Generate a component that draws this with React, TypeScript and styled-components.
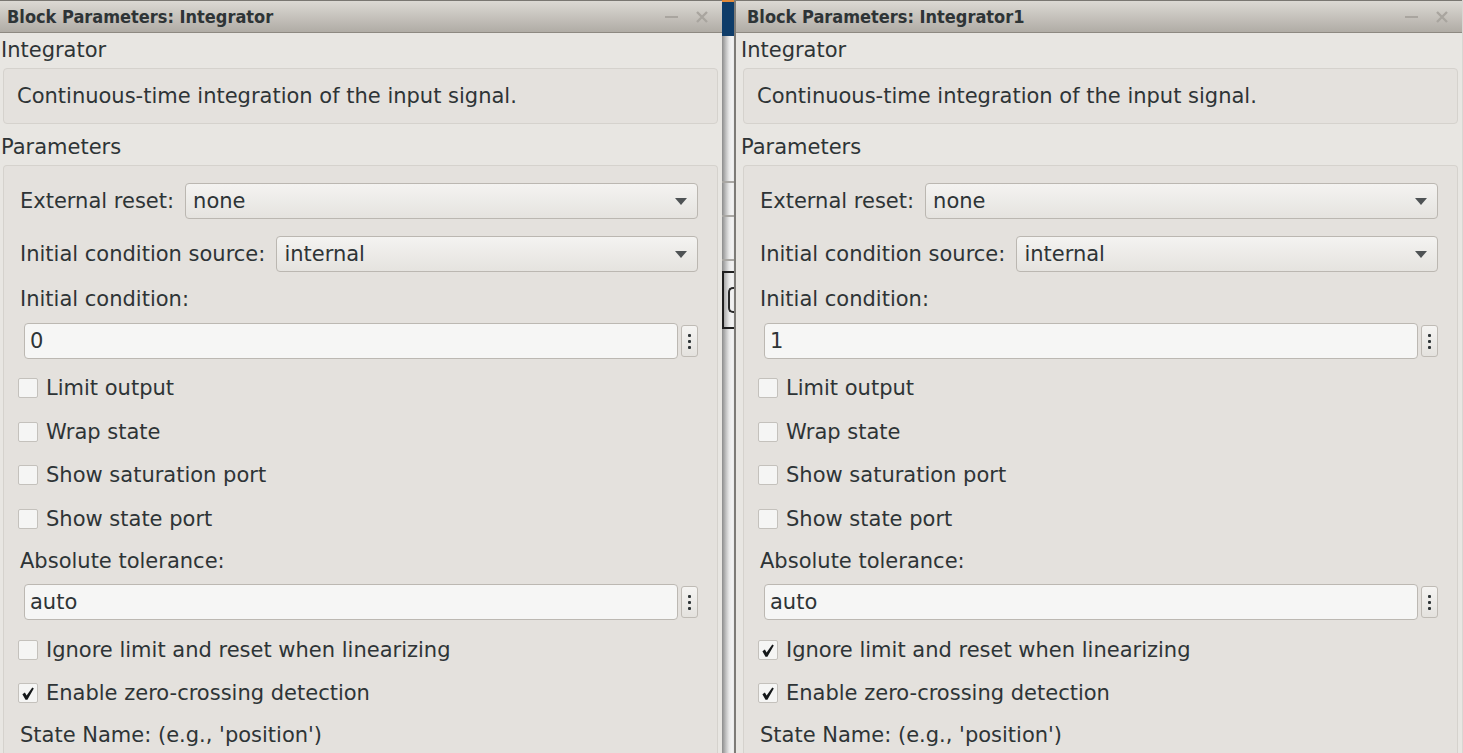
import React from "react";
import styled, { createGlobalStyle } from "styled-components";

const GlobalStyle = createGlobalStyle`
  html, body { margin: 0; padding: 0; background: #e8e6e2; }
  body {
    font-family: "DejaVu Sans", "Liberation Sans", sans-serif;
    color: #2e3436;
    overflow: hidden;
  }
  * { box-sizing: border-box; }
`;

const Desktop = styled.div`
  display: flex;
  width: 1463px;
  height: 753px;
  overflow: hidden;
  background: #d8d6d2;
`;

const Window = styled.section<{ $shift?: number }>`
  flex: 0 0 726px;
  margin-left: ${(p) => p.$shift ?? 0}px;
  display: flex;
  flex-direction: column;
  height: 100%;
  background: #e8e6e2;
`;

const TitleBar = styled.header`
  flex: 0 0 33px;
  display: flex;
  align-items: center;
  padding: 0 14px 0 11px;
  background: linear-gradient(#dcd9d4, #b0aca5);
  border-top: 1px solid #7a7772;
  border-bottom: 1px solid #8d8981;
`;

const Title = styled.h1`
  flex: 1;
  margin: 0;
  font-family: "DejaVu Sans Condensed", "DejaVu Sans", sans-serif;
  font-weight: bold;
  font-size: 18px;
  font-stretch: condensed;
  line-height: 22px;
  color: #2e3436;
  white-space: nowrap;
`;

const Controls = styled.div`
  display: flex;
  align-items: center;
  gap: 18px;
  color: #a9a59f;
`;

const Body = styled.div`
  flex: 1;
  min-height: 0;
  display: flex;
  flex-direction: column;
  padding: 0 4px 0 5px;
  font-size: 21px;
  line-height: 24px;
`;

const SectionLabel = styled.div<{ $mt: number }>`
  margin-top: ${(p) => p.$mt}px;
  line-height: 24px;
  white-space: nowrap;
`;

const DescBox = styled.div`
  margin: 6px 0 0 2px;
  height: 56px;
  display: flex;
  align-items: center;
  padding: 0 13px;
  border: 1px solid #d5d2cd;
  border-radius: 4px;
  background: #e4e1dd;
`;

const Group = styled.div`
  flex: 1;
  margin: 6px 0 0 2px;
  display: flex;
  flex-direction: column;
  padding: 17px 19px 0 16px;
  border: 1px solid #d5d2cd;
  border-bottom: none;
  border-radius: 4px 4px 0 0;
  background: #e4e1dd;
`;

const SelectRow = styled.div<{ $mt: number }>`
  margin-top: ${(p) => p.$mt}px;
  display: flex;
  align-items: center;
  gap: 11px;
  white-space: nowrap;
`;

const Select = styled.div`
  flex: 1;
  height: 36px;
  display: flex;
  align-items: center;
  justify-content: space-between;
  padding: 0 10px 0 7px;
  border: 1px solid #bbb7b1;
  border-radius: 4px;
  background: linear-gradient(#f4f3f1, #e5e3df);
`;

const FieldLabel = styled.div<{ $mt: number }>`
  margin-top: ${(p) => p.$mt}px;
  height: 24px;
  white-space: nowrap;
`;

const InputRow = styled.div<{ $mt: number }>`
  margin: ${(p) => p.$mt}px 0 0 4px;
  display: flex;
  align-items: center;
  gap: 3px;
`;

const TextInput = styled.div`
  flex: 1;
  height: 36px;
  display: flex;
  align-items: center;
  padding: 0 5px;
  border: 1px solid #bcb8b2;
  border-radius: 4px;
  background: #f6f6f5;
`;

const DotsButton = styled.div`
  flex: 0 0 17px;
  height: 32px;
  display: flex;
  flex-direction: column;
  align-items: center;
  justify-content: center;
  gap: 3px;
  border: 1px solid #bfbbb5;
  border-radius: 3px;
  background: linear-gradient(#f5f4f2, #e4e2de);
`;

const Dot = styled.span`
  width: 3px;
  height: 3px;
  border-radius: 1px;
  background: #2e3436;
`;

const CheckRow = styled.label<{ $mt: number }>`
  margin: ${(p) => p.$mt}px 0 0 -2px;
  height: 24px;
  display: flex;
  align-items: center;
  gap: 8px;
  white-space: nowrap;
`;

const CheckBox = styled.span`
  flex: 0 0 20px;
  height: 20px;
  display: flex;
  align-items: center;
  justify-content: center;
  border: 1px solid #c4c1bc;
  border-radius: 2px;
  background: #f5f5f4;
`;

const BackWindow = styled.div`
  flex: 0 0 14px;
  display: flex;
  flex-direction: column;
  background: linear-gradient(to right, #8b8b8b, #bdbdbd 30%, #e9e9e9 60%, #f3f3f3 85%, #e8e8e8);
  border-right: 2px solid #7d7b77;
`;

const BlueCap = styled.div`
  flex: 0 0 36px;
  background: #0e3c69;
  border-top: 2px solid #e0893a;
`;

const Track = styled.div<{ $h: number }>`
  flex: 0 0 ${(p) => p.$h}px;
  border-bottom: 2px solid #a9a7a3;
`;

const Frame = styled.div`
  margin-top: 10px;
  height: 58px;
  display: flex;
  align-items: center;
  padding-left: 4px;
  border: 2px solid #1f1f1f;
  border-right: none;
`;

const FrameInner = styled.div`
  flex: 1;
  height: 26px;
  border: 2px solid #2a2a2a;
  border-right: none;
  border-radius: 5px 0 0 5px;
`;

const Arrow = () => (
  <svg width="12" height="7" viewBox="0 0 12 7">
    <path d="M0 0 H12 L6 7 Z" fill="#4f5355" />
  </svg>
);

const Check = () => (
  <svg width="12" height="13" viewBox="0 0 12 13">
    <path d="M0.4 7.2 L2.9 5.6 L4.6 8.6 L10.3 0.4 L11.8 1.4 L5.4 12.8 L3.5 12.8 Z" fill="#15181a" />
  </svg>
);

const Minimize = () => (
  <svg width="13" height="13" viewBox="0 0 13 13">
    <rect x="0" y="6" width="13" height="2" fill="currentColor" />
  </svg>
);

const CloseX = () => (
  <svg width="12" height="12" viewBox="0 0 12 12">
    <path d="M1 1 L11 11 M11 1 L1 11" stroke="currentColor" strokeWidth="2.4" />
  </svg>
);

type DialogProps = {
  title: string;
  initial: string;
  ignoreLimit: boolean;
  shift?: number;
};

const Dialog = ({ title, initial, ignoreLimit, shift }: DialogProps) => (
  <Window $shift={shift}>
    <TitleBar>
      <Title>{title}</Title>
      <Controls>
        <Minimize />
        <CloseX />
      </Controls>
    </TitleBar>
    <Body>
      <SectionLabel $mt={5}>Integrator</SectionLabel>
      <DescBox>Continuous-time integration of the input signal.</DescBox>
      <SectionLabel $mt={11}>Parameters</SectionLabel>
      <Group>
        <SelectRow $mt={0}>
          External reset:
          <Select>
            none
            <Arrow />
          </Select>
        </SelectRow>
        <SelectRow $mt={17}>
          Initial condition source:
          <Select>
            internal
            <Arrow />
          </Select>
        </SelectRow>
        <FieldLabel $mt={15}>Initial condition:</FieldLabel>
        <InputRow $mt={12}>
          <TextInput>{initial}</TextInput>
          <DotsButton>
            <Dot />
            <Dot />
            <Dot />
          </DotsButton>
        </InputRow>
        <CheckRow $mt={17}>
          <CheckBox />
          Limit output
        </CheckRow>
        <CheckRow $mt={20}>
          <CheckBox />
          Wrap state
        </CheckRow>
        <CheckRow $mt={19}>
          <CheckBox />
          Show saturation port
        </CheckRow>
        <CheckRow $mt={20}>
          <CheckBox />
          Show state port
        </CheckRow>
        <FieldLabel $mt={18}>Absolute tolerance:</FieldLabel>
        <InputRow $mt={11}>
          <TextInput>auto</TextInput>
          <DotsButton>
            <Dot />
            <Dot />
            <Dot />
          </DotsButton>
        </InputRow>
        <CheckRow $mt={18}>
          <CheckBox>{ignoreLimit && <Check />}</CheckBox>
          Ignore limit and reset when linearizing
        </CheckRow>
        <CheckRow $mt={19}>
          <CheckBox>
            <Check />
          </CheckBox>
          Enable zero-crossing detection
        </CheckRow>
        <FieldLabel $mt={18}>State Name: (e.g., 'position')</FieldLabel>
      </Group>
    </Body>
  </Window>
);

export default function App() {
  return (
    <>
      <GlobalStyle />
      <Desktop>
        <Dialog title="Block Parameters: Integrator" initial="0" ignoreLimit={false} shift={-4} />
        <BackWindow>
          <BlueCap />
          <Track $h={147} />
          <Track $h={34} />
          <Track $h={44} />
          <Frame>
            <FrameInner />
          </Frame>
        </BackWindow>
        <Dialog title="Block Parameters: Integrator1" initial="1" ignoreLimit={true} />
      </Desktop>
    </>
  );
}
